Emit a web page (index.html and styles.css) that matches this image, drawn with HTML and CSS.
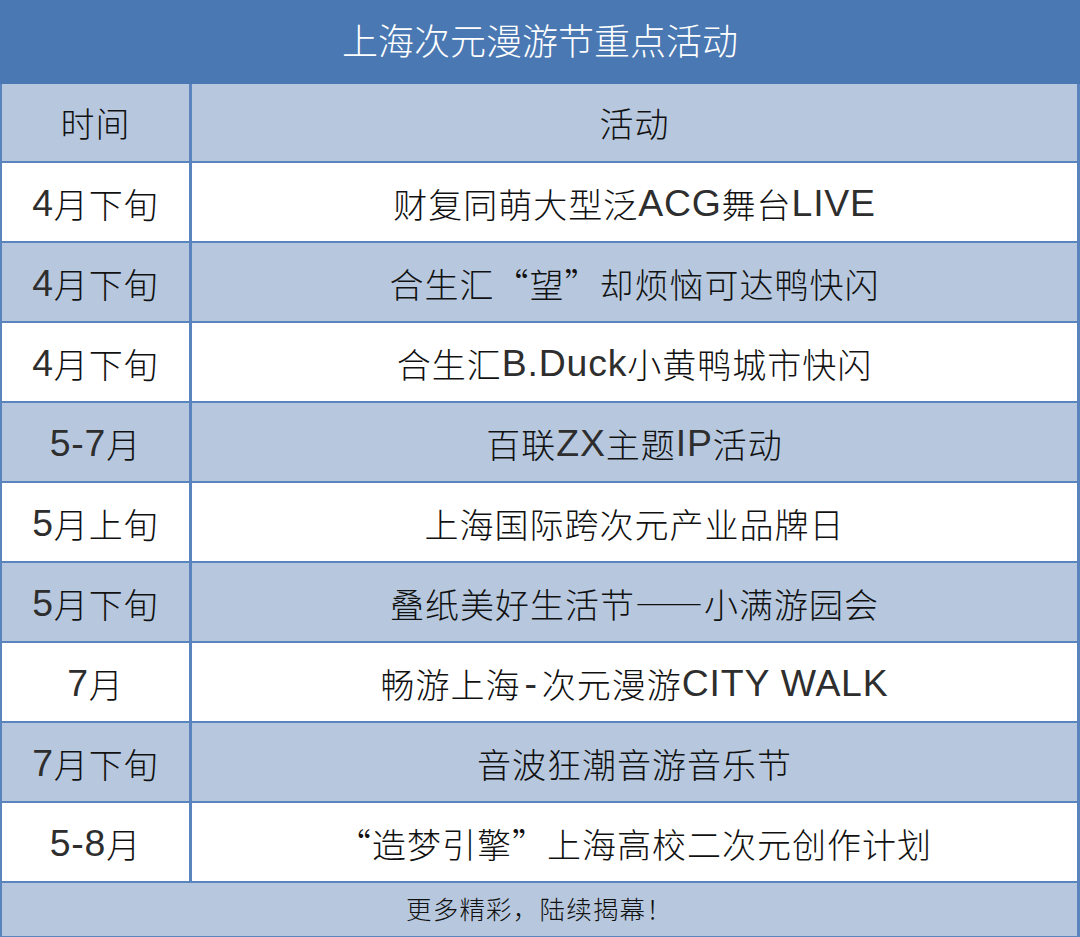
FILE: index.html
```html
<!DOCTYPE html>
<html lang="zh-CN">
<head>
<meta charset="utf-8">
<title>上海次元漫游节重点活动</title>
<link rel="stylesheet" href="styles.css">
</head>
<body>
<div class="table">
  <div class="title">上海次元漫游节重点活动</div>
  <div class="cell head">时间</div>
  <div class="cell head">活动</div>

  <div class="cell"><span class="lat">4</span>月下旬</div>
  <div class="cell">财复同萌大型泛<span class="lat">ACG</span>舞台<span class="lat">LIVE</span></div>

  <div class="cell alt"><span class="lat">4</span>月下旬</div>
  <div class="cell alt">合生汇“望”却烦恼可达鸭快闪</div>

  <div class="cell"><span class="lat">4</span>月下旬</div>
  <div class="cell">合生汇<span class="lat">B.Duck</span>小黄鸭城市快闪</div>

  <div class="cell alt"><span class="lat">5-7</span>月</div>
  <div class="cell alt">百联<span class="lat">ZX</span>主题<span class="lat">IP</span>活动</div>

  <div class="cell"><span class="lat">5</span>月上旬</div>
  <div class="cell">上海国际跨次元产业品牌日</div>

  <div class="cell alt"><span class="lat">5</span>月下旬</div>
  <div class="cell alt">叠纸美好生活节——小满游园会</div>

  <div class="cell"><span class="lat">7</span>月</div>
  <div class="cell">畅游上海<span class="lat dash">-</span>次元漫游<span class="lat">CITY WALK</span></div>

  <div class="cell alt"><span class="lat">7</span>月下旬</div>
  <div class="cell alt">音波狂潮音游音乐节</div>

  <div class="cell"><span class="lat">5-8</span>月</div>
  <div class="cell">“造梦引擎”上海高校二次元创作计划</div>

  <div class="footer">更多精彩，陆续揭幕！</div>
</div>
</body>
</html>
```

FILE: styles.css
```css
html, body {
  margin: 0;
  padding: 0;
  background: #ffffff;
}

body {
  font-family: "Noto Sans CJK SC", sans-serif;
  color: #111111;
}

.lat {
  font-family: "Liberation Sans", "Noto Sans CJK SC", sans-serif;
  font-size: 1.1em;
  font-weight: 400;
  letter-spacing: 0.8px;
  color: #2e2e2e;
}

.dash {
  padding: 0 4px;
}

.table {
  width: 1080px;
  height: 937px;
  box-sizing: border-box;
  display: grid;
  grid-template-columns: 187px 1fr;
  grid-template-rows: 82px 77px repeat(9, 78px) 53px;
  column-gap: 3px;
  row-gap: 2px;
  padding: 0 3px 3px 2px;
  background: #5a84bd;
}

.title {
  grid-column: 1 / -1;
  margin: 0 -3px -2px -2px;
  background: #4a78b2;
  color: #ffffff;
  font-size: 36px;
  font-weight: 300;
  display: flex;
  align-items: center;
  justify-content: center;
  padding-bottom: 6px;
}

.cell {
  background: #ffffff;
  font-size: 34px;
  font-weight: 300;
  letter-spacing: 1px;
  display: flex;
  align-items: center;
  justify-content: center;
  padding-top: 3px;
  box-sizing: border-box;
  white-space: pre;
}

.cell.head,
.cell.alt {
  background: #b7c8de;
}

.cell.head {
  padding-top: 0;
}

.footer {
  grid-column: 1 / -1;
  background: #b7c8de;
  font-size: 25.5px;
  font-weight: 300;
  letter-spacing: 1.2px;
  display: flex;
  align-items: center;
  justify-content: center;
  padding-bottom: 4px;
}
```
